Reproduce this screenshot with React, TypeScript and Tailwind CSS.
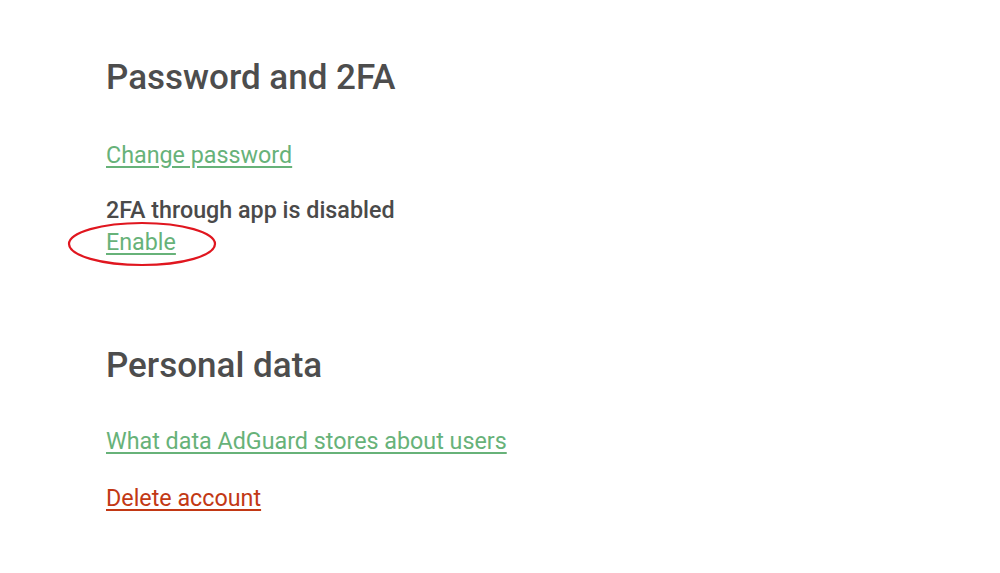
export default function App() {
  return (
    <div
      className="min-h-[573px] w-full bg-white pl-[106px] pt-[57px] text-[#4a4a4a]"
      style={{ fontFamily: 'Roboto, "Liberation Sans", sans-serif' }}
    >
      <section>
        <h2 className="text-[35px] font-medium leading-[42px] text-[#4d4d4d]">Password and 2FA</h2>
        <div className="mt-[40px]">
          <a href="#" className="text-[23.3px] leading-[32px] text-[#67b279] underline underline-offset-[3px]">
            Change password
          </a>
        </div>
        <div className="mt-[23px] text-[23.3px] font-medium leading-[32px]">2FA through app is disabled</div>
        <div className="relative">
          <a href="#" className="text-[23.3px] leading-[32px] text-[#67b279] underline underline-offset-[3px]">
            Enable
          </a>
          <svg
            className="pointer-events-none absolute left-[-39px] top-[-5px]"
            width="152"
            height="48"
            viewBox="0 0 152 48"
          >
            <ellipse cx="75" cy="23" rx="73" ry="21" fill="none" stroke="#e0161f" strokeWidth="2.2" />
          </svg>
        </div>
      </section>
      <section className="mt-[87px]">
        <h2 className="text-[35px] font-medium leading-[42px] text-[#4d4d4d]">Personal data</h2>
        <div className="mt-[38px]">
          <a href="#" className="text-[23.3px] leading-[32px] text-[#67b279] underline underline-offset-[3px]">
            What data AdGuard stores about users
          </a>
        </div>
        <div className="mt-[25px]">
          <a href="#" className="text-[23.3px] leading-[32px] text-[#c23814] underline underline-offset-[3px]">
            Delete account
          </a>
        </div>
      </section>
    </div>
  );
}
